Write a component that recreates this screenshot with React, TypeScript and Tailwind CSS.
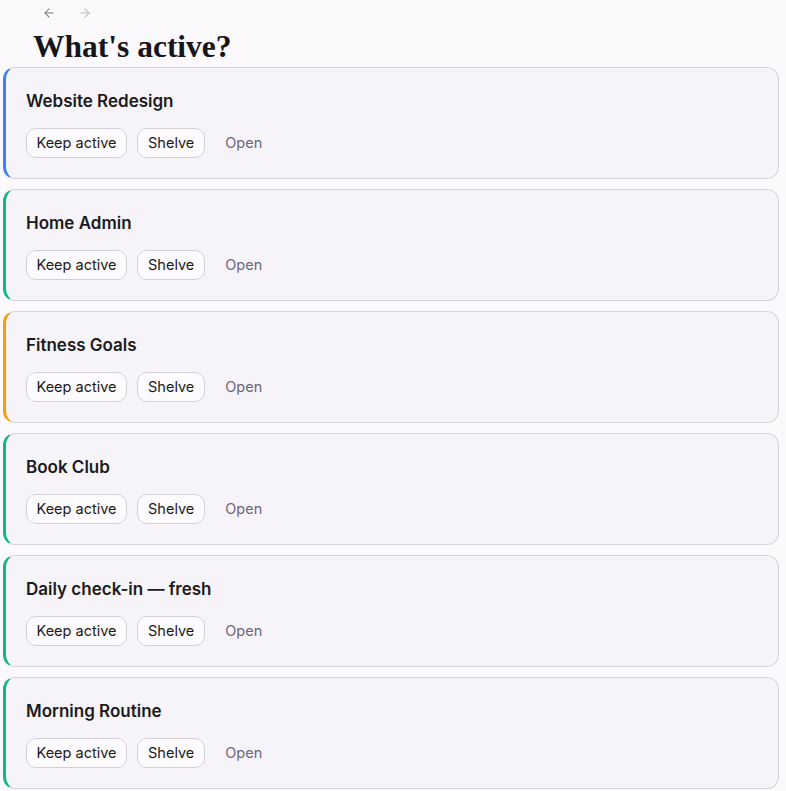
import { ArrowLeft, ArrowRight } from "lucide-react";

type Project = {
  id: number;
  name: string;
  accent: string;
};

const projects: Project[] = [
  { id: 1, name: "Website Redesign", accent: "border-l-[#3b82f6]" },
  { id: 2, name: "Home Admin", accent: "border-l-[#10b981]" },
  { id: 3, name: "Fitness Goals", accent: "border-l-[#f59e0b]" },
  { id: 4, name: "Book Club", accent: "border-l-[#10b981]" },
  { id: 5, name: "Daily check-in — fresh", accent: "border-l-[#10b981]" },
  { id: 6, name: "Morning Routine", accent: "border-l-[#10b981]" },
];

const ProjectCard = ({ project }: { project: Project }): JSX.Element => {
  return (
    <div
      className={`rounded-xl border border-[#d6d2da] border-l-[3px] ${project.accent} bg-[#f7f4f9] pl-[20px] pr-5 pt-[21px] pb-[20px]`}
    >
      <h2 className="text-[17px] leading-6 font-semibold text-[#1c1a20]">
        {project.name}
      </h2>
      <div className="mt-[15px] flex items-center gap-[10px]">
        <button className="h-[30px] rounded-[10px] border border-[#d4d0d8] bg-[#fdfbfe] px-[9.5px] text-[14.5px] text-[#1c1a20]">
          Keep active
        </button>
        <button className="h-[30px] rounded-[10px] border border-[#d4d0d8] bg-[#fdfbfe] px-[10px] text-[14.5px] text-[#1c1a20]">
          Shelve
        </button>
        <button className="h-[30px] px-[10px] text-[14.5px] text-[#6e6379]">
          Open
        </button>
      </div>
    </div>
  );
};

const App = (): JSX.Element => {
  return (
    <div
      className="min-h-screen w-full bg-[#fcf9fd] pl-[3px] pr-[7px]"
      style={{ fontFamily: "Inter, 'Noto Sans', sans-serif" }}
    >
      <div className="flex items-center gap-[22px] pl-[39px] pt-[6px] h-[14px] box-content">
        <ArrowLeft className="h-[14px] w-[14px] text-[#77727c]" strokeWidth={1.75} />
        <ArrowRight className="h-[14px] w-[14px] text-[#b9b5bd]" strokeWidth={1.75} />
      </div>
      <h1
        className="pl-[30px] pt-[8px] text-[31.5px] leading-[38px] font-bold text-[#17151a]"
        style={{ fontFamily: "'Liberation Serif', 'DejaVu Serif', serif" }}
      >
        What's active?
      </h1>
      <div className="mt-[1px] flex flex-col gap-[10px]">
        {projects.map((project) => (
          <ProjectCard key={project.id} project={project} />
        ))}
      </div>
    </div>
  );
};

export default App;
